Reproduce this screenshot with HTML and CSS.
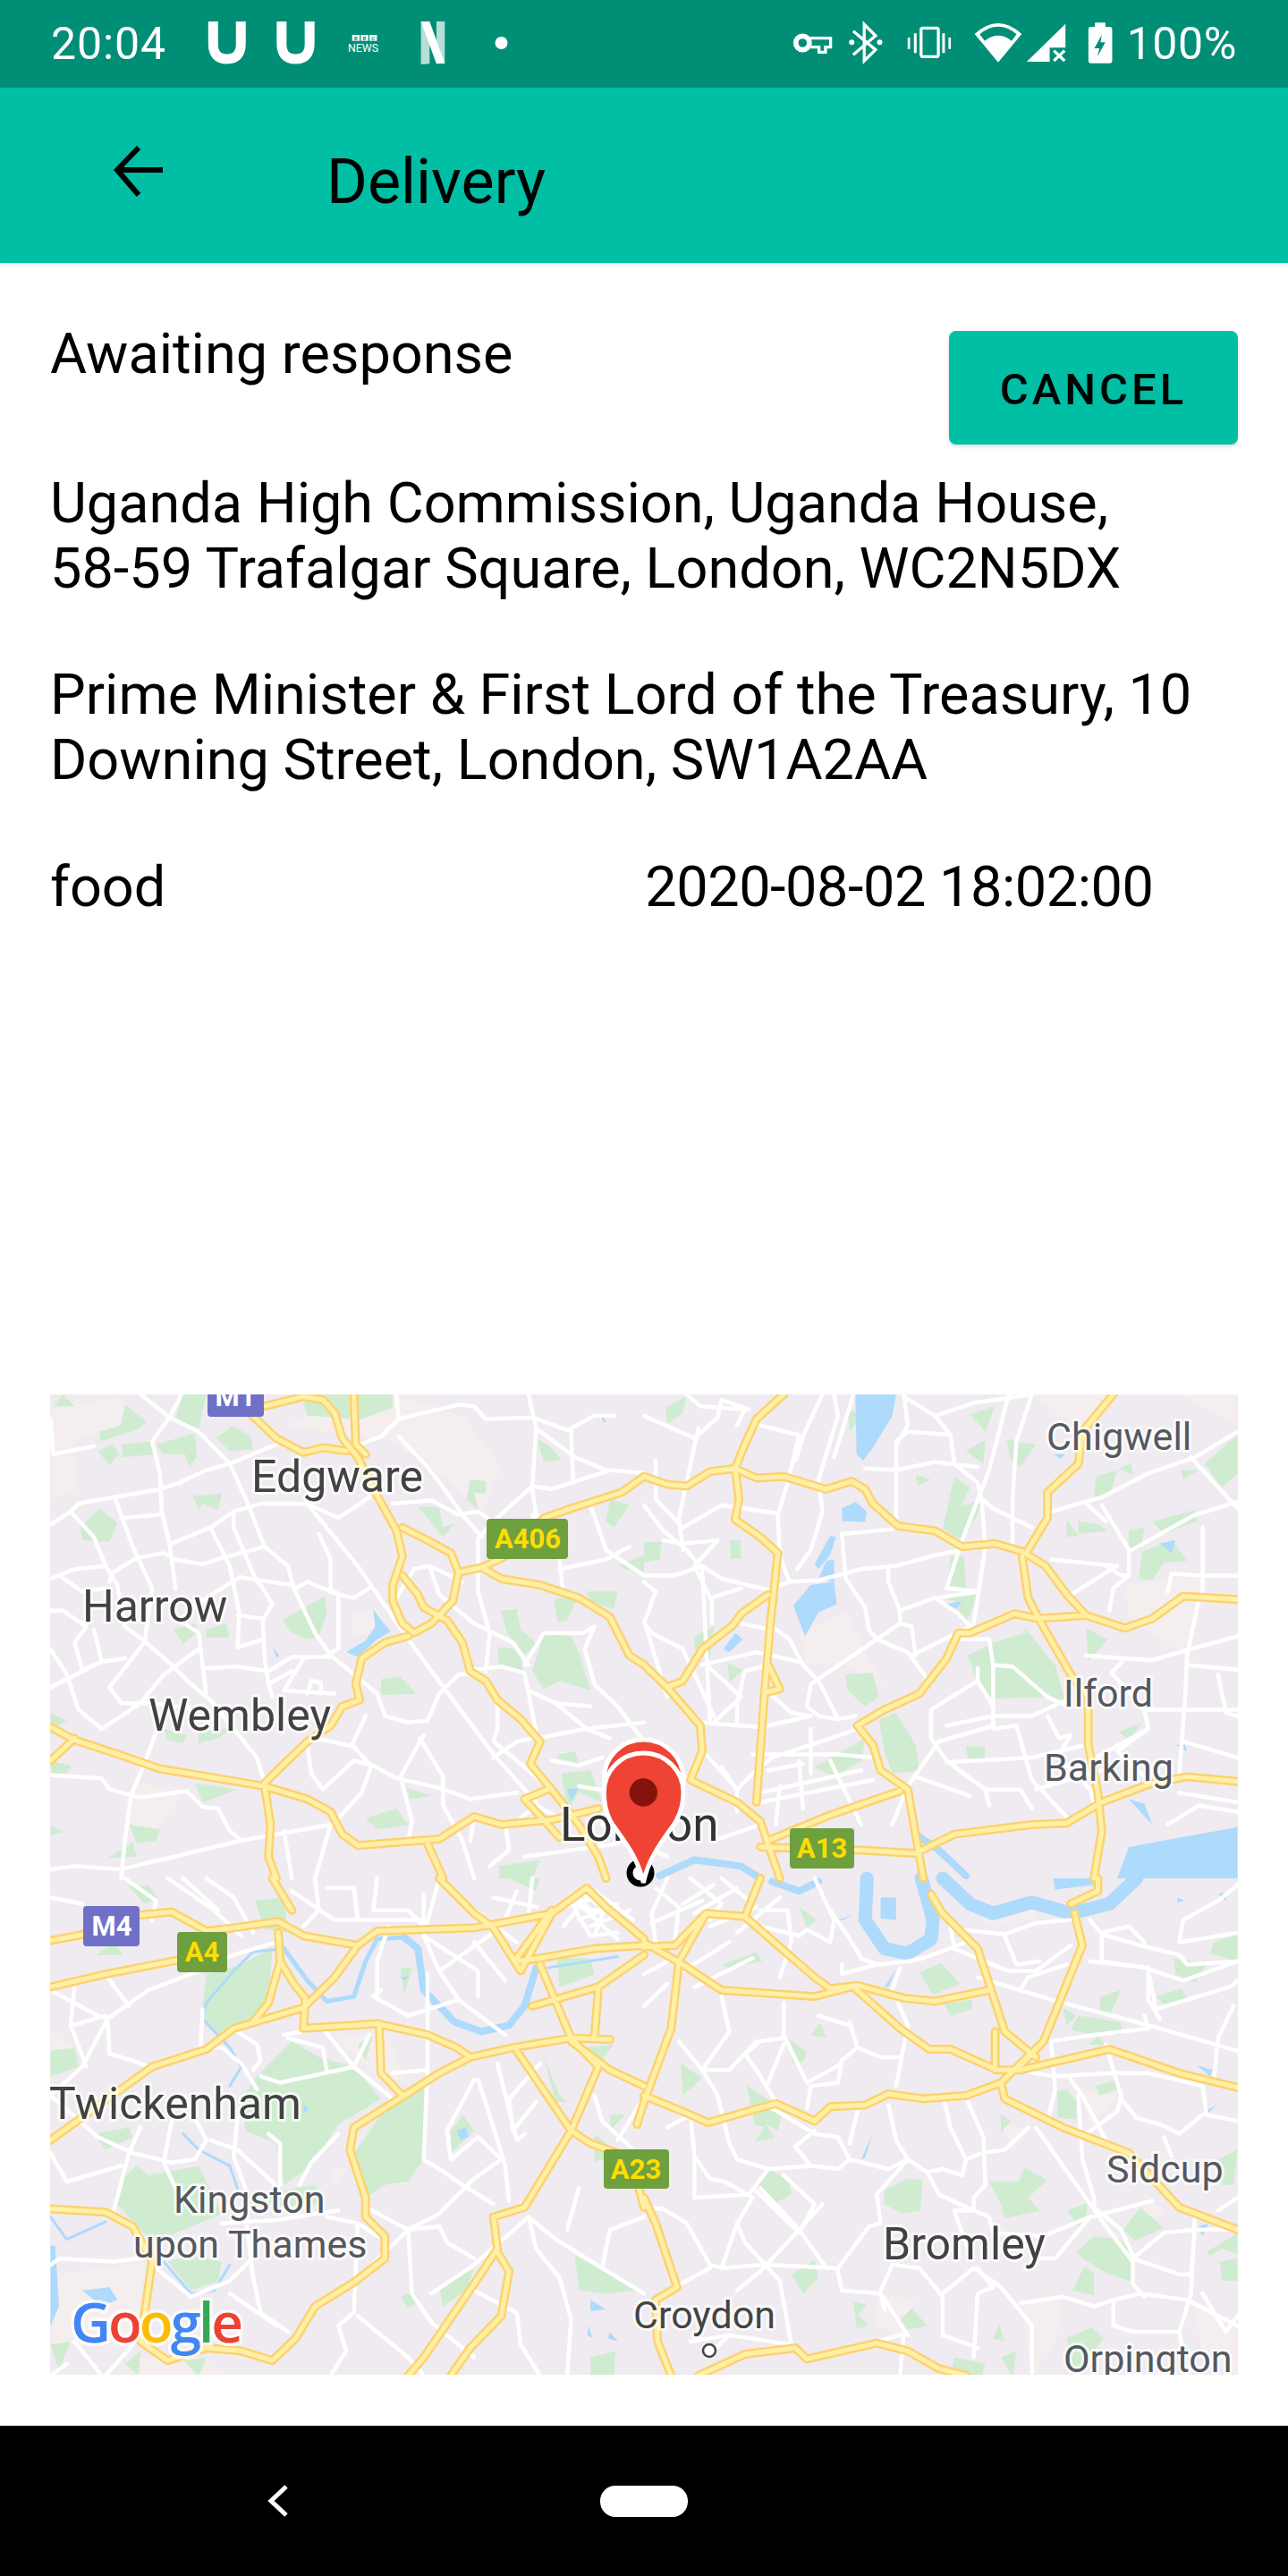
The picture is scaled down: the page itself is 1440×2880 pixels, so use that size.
FILE: index.html
```html
<!DOCTYPE html>
<html lang="en">
<head>
  <meta charset="UTF-8" />
  <meta name="viewport" content="width=device-width, initial-scale=1.0"/>
  <title>Delivery</title>
  <link rel="stylesheet" href="styles.css">
</head>
<body>
  <div class="status-bar">
    <span class="status-time">20:04</span>
    <svg class="status-left" viewBox="0 0 1080 210" width="360" height="70">
      <path class="u" d="M55,30V105Q55,156 101,156Q148,156 148,105V30"/>
      <path class="u" d="M285,30V105Q285,156 332,156Q379,156 379,105V30"/>
      <g class="bbc">
        <rect x="522" y="75" width="25" height="20"/><rect x="551" y="75" width="25" height="20"/><rect x="580" y="75" width="25" height="20"/>
        <text class="bbc-letter" x="534" y="92">B</text><text class="bbc-letter" x="563" y="92">B</text><text class="bbc-letter" x="592" y="92">C</text>
        <text class="bbc-news" x="508" y="132">NEWS</text>
      </g>
      <path class="n-side" d="M753,30H782V172L753,174ZM805,30H833V172L805,170Z"/>
      <path class="n-main" d="M753,30H782L833,170L805,172Z"/>
      <circle class="dot" cx="1023" cy="102" r="21"/>
    </svg>
    <svg class="status-right" viewBox="0 0 1140 210" width="380" height="70">
      <circle class="line" cx="55" cy="102" r="23" stroke-width="17"/>
      <path class="line thin" d="M80,86H149V116H132V133H110V116H82"/>
      <path class="line thin" d="M225,62L300,125L262,162V40L300,78L225,142"/>
      <circle class="dot" cx="220" cy="100" r="9"/><circle class="dot" cx="314" cy="100" r="9"/>
      <rect class="line thin" x="453" y="52" width="58" height="96" rx="6"/>
      <path class="dot" d="M408,84h8v38h-8zM429,70h9v66h-9zM524,70h9v66h-9zM545,84h8v38h-8z"/>
      <path class="dot" d="M712,167L633,72Q712,0 791,72Z"/>
      <path class="cut" d="M650,73Q712,22 774,73L757,95Q712,60 667,95Z"/>
      <path class="dot" d="M808,165L938,38V118H885V165Z"/>
      <path class="line thin" d="M899,128L935,162M935,128L899,162"/>
      <path class="dot" d="M1037,34H1072V48H1086Q1095,48 1095,57V161Q1095,170 1086,170H1024Q1015,170 1015,161V57Q1015,48 1024,48H1037Z"/>
      <path class="cut" d="M1060,75L1035,120H1052L1045,148L1072,100H1056Z"/>
    </svg>
    <span class="status-battery">100%</span>
  </div>

  <header class="app-bar">
    <svg class="back-arrow" viewBox="0 0 60 60" width="60" height="60"><path d="M58,28H9M31,3L7,28L31,56"/></svg>
    <h1>Delivery</h1>
  </header>

  <main class="content">
    <div class="top-row">
      <p class="line">Awaiting response</p>
      <button class="cancel">CANCEL</button>
    </div>
    <p class="address">Uganda High Commission, Uganda House,<br>58-59 Trafalgar Square, London, WC2N5DX</p>
    <p class="address">Prime Minister &amp; First Lord of the Treasury, 10<br>Downing Street, London, SW1A2AA</p>
    <div class="meta-row">
      <span>food</span>
      <span class="when">2020-08-02 18:02:00</span>
    </div>

    <svg class="map" viewBox="56 1559 1328 1096" width="1328" height="1096">
      <defs>
        <path id="yellow-a" d="M590,90L690,60L740,70L770,110L790,190L830,250L880,370L930,480L945,560L920,650L920,700L945,770L975,800
          M820,53L825,210L850,240 M550,110L620,190L690,235L740,220L800,230
          M960,810L900,830L840,880L825,960L835,1010L790,1030L760,1090L700,1140L640,1210L590,1270
          M38,1095L100,1135L200,1175L320,1225L590,1280L700,1320L760,1360L790,1430L830,1465L1040,1445L1130,1375L1200,1400L1330,1385L1450,1350
          M945,470L1010,510L1070,550L1090,610L1150,595L1210,560L1310,440L1380,410L1510,360L1568,310
          M1090,610L1075,700L1020,770L975,800
          M945,620L985,680L1000,720L1060,760L1100,830L1120,920L1160,950L1190,1010L1250,1070L1300,1140L1275,1210L1330,1290L1400,1400L1450,1500L1470,1568
          M1150,595L1200,630L1300,650L1400,690L1480,750L1530,870L1568,900
          M590,1280L605,1400L600,1500L620,1568 M1010,1460L1050,1568 M1260,1320L1320,1290 M1260,1320L1350,1440 M38,1200L100,1130"/>
        <path id="yellow-b" d="M0,310L60,335L110,340L170,295L235,285L290,315L360,310L470,350L535,325L570,350L590,395L655,465L750,480L820,530L905,520L975,545L1035,590L1090,680L1140,745L1240,785L1310,755L1390,685L1530,695
          M360,53L290,130L260,210L235,285L245,380L235,445L300,500L345,550L325,780L310,1000L290,1330
          M320,900L350,975L320,985 M320,680L250,740L230,775L150,850L100,950L60,970
          M0,900L60,970L145,1090L150,1170L120,1260L240,1330L300,1390L325,1480L350,1568
          M1210,53L1130,170L1120,270L1040,360L1040,440L990,540
          M975,560L990,690L1020,760L1100,930L1145,1000L1145,1150L1170,1300L1180,1420L1160,1568
          M1140,745L1015,755L955,740L840,800L810,800L780,880L710,990L620,1040L550,1090L590,1150L610,1230L680,1290L700,1430L720,1568
          M320,1450L480,1370L660,1295
          M300,1470L560,1480L700,1490L800,1430L1000,1400L1090,1395L1180,1330L1310,1270L1400,1250L1530,1265"/>
        <path id="yellow-c" d="M38,195L125,175 M270,115L350,105L440,165L510,155L625,135L690,180L830,210L880,165L1130,155L1330,110L1420,30
          M38,340L180,300L370,255 M625,170L630,260L600,390L560,450
          M630,260L665,330L695,375L690,470L880,455L1010,490L1085,530L1120,560L1230,530L1380,500L1480,505
          M38,820L220,660L300,590L440,535L510,470L690,405L770,310L830,210
          M1120,560L1040,610L950,680L820,780L810,850L850,1000L850,1060L900,1120L900,1190L820,1265L720,1340L670,1440L610,1510L530,1480L440,1470L340,1510L270,1450L300,1200L250,1090L180,1045L38,1035
          M885,455L890,610L945,680 M660,100L610,0 M1040,0L1130,110L1180,155L1250,290L1330,110
          M1300,270L1380,500L1450,590L1380,790L1260,1030L1180,1060L1190,1160L1130,1270L1000,1500L960,1557
          M1190,1170L1220,1230L1200,1370L1120,1470L1070,1557
          M1240,540L1380,790L1430,830L1500,860 M1380,510L1480,600L1568,650 M1450,350L1440,500
          M1280,400L1450,340L1568,240 M1240,260L1300,250L1440,220L1568,210 M1420,30L1470,90L1568,190
          M1550,770L1568,700 M1550,950L1568,1030 M1330,100L1240,250"/>
        <path id="yellow-d" d="M300,0L260,120L160,110L80,210L0,215 M160,110L90,260L70,470L0,700
          M260,120L440,310L480,345L550,335L670,375L750,385L890,350
          M0,200L100,270L200,350L440,370L550,335
          M0,680L110,735L165,765L340,705L440,760L480,715L570,710L630,675L720,690L830,680L920,640L1030,510
          M540,340L660,470L735,535L790,535L910,600L970,600L1040,580L1200,535L1380,610L1530,655
          M740,50L770,110L860,220L930,480L1010,560 M1110,110L1130,210L1030,510L960,600
          M1100,80L1170,40L1170,0 M905,600L905,480
          M920,640L930,690L1080,780L1250,860L1380,1030L1530,1100
          M0,1000L30,1080L85,1280L30,1320L35,1450L70,1557
          M140,1557L260,1490L390,1470L420,1505L600,1455L680,1480L760,1535L830,1557"/>
      </defs>

      <rect class="land" x="56" y="1559" width="1328" height="1096"/>

      <!-- quadrants are traced at the same scale, only the origin changes -->
      <g transform="translate(40,1540) scale(.4337,.3571)">
        <path class="urban" d="M38,100L220,60L260,130L100,200L100,360L38,380Z M640,150L760,100L920,55L1100,120L1200,280L1150,420L1040,300L920,200Z M810,740L880,720L900,800L820,810Z M250,1270L390,1290L300,1430L240,1450Z"/>
        <path class="park" d="M45,90L70,53L100,90Z M165,170L220,150L230,85L285,140L260,165L165,200Z M160,230L200,210L215,240L190,275Z M220,210L300,200L310,240L225,250Z M310,210L410,175L415,250L395,280L385,240L330,240Z M360,130L380,53L440,53L420,160Z M465,190L510,150L555,190L560,225L500,230Z M690,80L720,53L920,53L920,95L840,130L700,120Z M405,370L480,365L470,415L430,395L420,415Z M115,470L165,410L210,455L190,515L120,510Z M635,760L745,685L750,740L730,810L700,820L655,795Z M355,790L410,770L415,800L380,835Z M440,790L490,770L500,815L440,815Z M890,945L940,935L980,990L890,995Z M985,405L1040,405L1050,470L1080,455L1050,500L1010,440Z M1120,320L1160,325L1160,365L1130,360L1140,415L1110,380Z M1290,190L1330,220L1355,260L1310,265Z M1200,730L1240,725L1250,790L1290,830L1260,870L1215,800Z M1190,845L1250,850L1255,920L1195,905Z M1310,800L1380,810L1400,860L1430,980L1350,950L1310,975L1280,920Z M1420,670L1500,670L1490,725L1430,700Z M1335,695L1400,680L1370,760L1345,765Z M1480,380L1530,400L1490,470L1470,450Z M1350,1180L1390,1170L1400,1210L1340,1190Z M1355,1240L1430,1230L1460,1330L1400,1300L1370,1360Z M850,1380L930,1350L960,1400L880,1415Z M955,1285L1020,1310L965,1320Z M240,1400L320,1415L310,1450L260,1460Z M185,1505L250,1455L260,1500Z M40,1400L70,1425L38,1430Z M38,1050L80,1075L40,1100Z M40,1200L90,1215L80,1240L40,1240Z M410,1270L520,1290L430,1330Z M330,1100L390,1120L380,1145L340,1135Z M420,1110L510,1095L470,1130L420,1145Z M1195,1530L1300,1510L1280,1568L1195,1568Z M1500,590L1568,555L1568,610L1520,600Z"/>
        <path class="water" d="M870,725L890,760L915,795L880,820L830,875L800,860L850,825L875,780Z M612,845L628,870L620,878Z M1370,1290L1400,1285L1380,1325Z M1455,105L1470,140L1462,140Z"/>
        <path class="minor" d="M270,53L345,125L420,170L500,270L545,390L590,530L650,590L665,660L720,800L760,870L820,930L880,990L900,1060L960,1080L1010,1075L1040,990
          M375,53L345,125L300,200L320,300L325,420L345,520L360,660
          M38,130L45,240L150,215 M38,460L90,420L110,395L200,375L320,350L370,330L440,290L500,270L560,240L620,210
          M90,420L150,500L180,590L210,650L230,780L285,830L350,900L400,960L450,1010L510,1100L570,1190L590,1270
          M205,380L250,530L300,660L280,830L190,970 M220,440L320,430
          M350,520L450,470L510,420L580,395L700,395L780,440L860,375
          M450,470L480,540L500,590L525,740L520,845L585,820
          M510,420L510,470L570,640L580,650L610,710L585,760L590,880L600,960L610,1000
          M590,530L480,565L430,585L360,570L330,550L260,565L200,610L190,640
          M38,630L60,620L100,600L180,590 M60,620L120,670L180,660
          M700,395L830,590L960,820L1100,1050L1180,1180L1290,1330
          M730,490L760,570L760,660L780,680L780,850L750,870
          M670,660L700,640L780,680L820,690L860,660 M525,625L660,650
          M520,630L440,690L370,760L420,800L430,900L440,1000 M520,745L585,755
          M38,730L70,730L130,780L100,830L120,915L170,890L150,790
          M38,970L170,890L230,880 M38,850L80,930L110,1040L170,1100L270,1020L330,930L420,850
          M190,970L220,1020L300,1020L430,1040 M440,910L520,905L600,920L660,875L760,875
          M690,880L640,980L770,990 M700,990L710,950L735,955L735,990 M600,960L660,920
          M38,1245L170,1255L190,1290L270,1315L390,1295L430,1345L470,1350L500,1420L530,1450L760,1400
          M310,1110L280,1210L245,1310L230,1450L220,1568
          M700,1150L710,1240L740,1290L820,1200L870,1215L930,1255L1040,1285L1120,1320L1240,1300
          M865,1215L840,1300L780,1380 M850,1060L815,1150L860,1210
          M1000,1120L940,1250L970,1390L960,1450 M990,1130L1050,1250L1050,1340L1100,1450L1130,1568
          M720,1130L820,1155 M640,1420L660,1568 M760,1400L720,1568 M38,1540L100,1530L220,1540L530,1450
          M1040,990L1090,930L1120,930
          M835,210L890,185L935,130L1090,85L1130,90L1160,130L1280,125L1370,165L1440,120L1490,120
          M930,53L935,130 M935,185L1010,280L1060,360L1100,430L1150,500
          M920,395L1020,385L1090,430L1140,420L1200,470
          M1270,53L1290,160L1280,340L1180,450L1140,505L1140,670L1170,800L1160,920
          M1280,340L1330,350L1380,330L1480,290L1568,300 M1380,165L1385,320 M1290,160L1390,250L1470,290 M1280,350L1290,430L1310,440
          M1100,640L1015,590L975,600L930,690 M1015,590L1040,680L1130,770L1230,830L1270,900
          M1260,900L1310,800L1410,800L1440,780L1415,850L1440,960L1500,1030L1568,1140
          M1130,915L1200,905L1260,925L1290,1110 M1270,980L1340,1020L1430,1030 M1340,1020L1420,1100L1480,1130
          M1190,1020L1190,1100L1180,1140L1240,1200L1330,1290 M1290,1130L1420,1100L1568,1080 M1180,1190L1240,1140L1280,1130
          M1280,430L1350,570L1360,680 M1430,400L1470,540L1568,620 M1350,600L1470,570L1530,530
          M1130,1375L1120,1450 M1210,1390L1220,1480L1170,1530 M1260,1500L1500,1460 M1330,1200L1400,1215L1460,1190
          M1230,1400L1290,1340L1350,1380 M1400,1280L1500,1300L1568,1260 M1460,1400L1568,1370 M1490,1200L1500,1300L1568,1430"/>
      </g>

      <g transform="translate(720,1540) scale(.4337,.3571)">
        <path class="urban" d="M1000,55L1200,53L1130,170Z M1240,650L1440,620L1400,870L1250,760Z M400,800L520,730L620,980L520,900L420,900Z M1380,53L1530,53L1530,150Z"/>
        <path class="park" d="M55,95L110,60L100,110L60,145Z M0,515L45,515L40,570L0,580Z M220,510L250,510L250,565L225,570Z M525,105L570,110L530,170Z M840,115L905,90L880,170Z M935,195L1010,210L970,280L945,255Z M830,230L880,195L875,270Z M700,305L740,320L705,340Z M800,310L840,345L815,405L870,380L860,430L820,510L770,475Z M790,560L825,560L830,660L785,650Z M1165,310L1220,290L1200,370L1160,375Z M1225,285L1255,270L1260,305Z M1090,445L1120,495L1090,500Z M1120,450L1170,460L1195,480L1120,490Z M1250,480L1290,470L1280,540L1250,530Z M1310,450L1420,415L1425,450L1340,490Z M1285,545L1360,510L1400,575L1340,580L1310,635L1275,630Z M1385,290L1430,290L1390,320Z M1445,270L1530,180L1530,300L1490,345Z M770,690L860,680L830,770L800,700Z M130,810L180,780L170,880L130,850Z M215,895L255,915L220,955Z M520,930L590,925L605,1000L570,1030L525,980Z M605,1070L650,1050L700,1150L710,1230L640,1240L620,1170Z M440,1220L570,1130L560,1200L490,1250Z M835,870L900,830L980,800L1060,900L1060,1000L900,1005L860,960Z M980,780L1040,870L1000,880Z M1000,930L1060,900L1085,1010L1060,1010Z M1140,785L1195,820L1145,890Z M1225,1110L1285,1080L1250,1135Z M830,1155L880,1155L878,1195L835,1195Z"/>
        <path class="water" d="M545,53L650,53L640,120L590,220L565,260L548,240Z M510,410L545,390L575,420L570,452L512,450Z M480,495L495,500L480,555L450,600L440,585Z M470,575L490,570L490,640L450,630Z M385,715L430,650L490,640L497,710L450,735L415,810Z M1330,520L1370,510L1360,550Z M780,710L820,700L805,725Z M1250,1320L1290,1335L1310,1400Z M1220,1568L1250,1470L1340,1450L1530,1408L1530,1568Z M1370,1150L1395,1150L1400,1172Z M205,850L235,800L255,820L220,860Z M1055,240L1085,240L1075,255Z"/>
        <path class="river" d="M40,1560L130,1510L250,1530L300,1568 M700,1430L760,1480L830,1560"/>
        <path class="minor" d="M0,120L130,190L190,125L200,70L270,100 M110,53L145,90L260,100L240,150
          M300,150L400,180L370,330L345,430L350,560L375,640L450,635L560,600L650,590L740,560L815,540
          M460,53L415,170L390,260 M490,53L500,120L450,320L460,420L430,540L395,600 M540,53L490,250
          M670,53L680,150L650,210L650,460 M670,60L750,120L790,180L800,270L860,330L870,380L900,410L1000,470
          M750,120L850,80L1000,53 M790,180L680,170L650,200 M570,285L650,290L750,265L860,280
          M940,53L890,290L820,510L780,660L860,670 M1000,53L960,200L950,380L950,530 M870,380L880,530L850,770
          M1050,420L1180,375L1300,300L1420,250L1530,170 M1410,250L1530,410
          M1180,400L1250,540L1250,620L1210,660L1200,730 M1250,545L1420,430L1530,390 M1140,395L1190,450
          M1050,570L1220,590L1100,680 M1190,590L1230,620L1250,620
          M1440,470L1440,680L1430,700L1400,870L1395,1000L1380,1240 M1360,615L1440,620L1530,620 M1360,615L1350,670
          M510,490L640,475 M510,490L520,630L570,720L580,790L600,820L680,860L740,960
          M630,590L630,640L660,730L660,770L600,820L430,960L420,1030L450,1060L500,1070L545,1060
          M660,770L690,780L700,870 M660,730L750,690L810,740L850,790 M760,690L860,670 M690,870L840,780
          M820,820L890,820L900,900L900,1100 M860,910L860,950L780,1010L740,1040L740,1130L780,1200L880,1290L890,1340
          M860,950L900,1030 M900,900L950,905L1040,1000L1085,1025
          M780,1090L900,1060L1000,1060L1090,1010 M760,1140L900,1090 M760,1140L680,1280
          M780,1205L1000,1190L1140,1150 M800,1220L880,1290L970,1290L1000,1350 M1010,1290L1180,1230
          M900,1100L960,1090L1000,1260L1100,1390 M1040,1060L1070,1130L1100,1120L1070,1180
          M1140,870L1240,880L1310,885L1530,810 M1240,880L1205,925L1290,1040L1300,1100L1150,1200
          M1400,900L1530,915 M1290,1040L1530,1040 M1480,930L1500,1050L1530,1060
          M1300,1100L1220,1170L1290,1250 M1390,1140L1530,1190
          M0,620L80,620L150,590L200,630L320,665L375,640 M50,510L100,520L190,510L130,590L175,700L175,770
          M0,400L50,480L110,540L150,600L170,1080 M100,540L90,440L140,160 M30,260L30,380L100,470L200,400L340,425
          M0,640L30,670L0,770L20,800L100,850L180,1060 M0,760L60,1000
          M175,690L250,660 M330,780L375,820L410,900L450,950L500,1070 M250,770L330,790
          M150,900L290,860L400,890 M170,910L250,1000L180,1080 M260,920L320,900 M260,920L240,1020L240,1090
          M320,985L380,1050L430,1060 M150,1080L300,1095L430,1060 M430,1100L430,1240
          M550,1100L480,1130L330,1190L280,1240L240,1290 M280,1180L500,1180L590,1190
          M300,1300L560,1230 M300,1330L590,1260 M480,1200L560,1400 M400,1200L410,1350 M350,1280L340,1400
          M640,1400L680,1280 M200,1220L240,1290L240,1360 M160,1180L240,1290 M0,1470L60,1500 M300,1400L180,1450
          M0,1180L70,1230L120,1260 M320,1230L410,1210 M700,1250L840,1310 M1080,1200L1150,1290L1160,1330 M1380,1300L1530,1330 M1350,1400L1430,1340L1530,1360"/>
      </g>

      <g transform="translate(40,2100) scale(.4337,.3571)">
        <path class="urban" d="M38,480L100,530L40,560Z M780,500L900,480L960,640L880,620Z M60,1240L280,1200L260,1460L38,1460Z M230,1500L440,1500L500,1557L260,1557Z M900,880L980,880L960,960L900,960Z M760,900L800,910L770,970Z"/>
        <path class="park" d="M240,25L290,20L315,65L280,80Z M565,70L640,60L650,170L590,160Z M155,240L200,200L225,240Z M440,300L530,270L610,215L600,390L560,440L470,490L440,450L430,400Z M38,540L100,530L110,590L38,620Z M570,620L660,510L730,560L820,590L890,690L780,770L710,900L640,960L620,830L540,790L530,690Z M820,860L920,690L1000,640L1000,880L960,950L900,960L850,1000Z M150,800L240,780L250,810L180,850Z M215,950L260,900L290,930L420,900L480,1050L400,1090L300,1140L210,1020Z M340,1200L400,1180L480,1200L470,1260L400,1290Z M530,1000L720,960L740,1020L540,1030Z M830,520L870,490L850,570Z M1070,790L1100,740L1130,790L1070,860Z M1040,1280L1130,1220L1110,1290L1050,1340Z M940,1310L975,1290L990,1320L960,1345Z M1390,1180L1550,1290L1470,1300L1400,1290Z M1430,1500L1495,1480L1490,1557L1430,1557Z M1345,250L1430,250L1440,300L1350,340Z M1415,530L1490,520L1450,580Z M1310,560L1350,680L1370,700L1340,700Z M1480,740L1520,740L1480,790Z M1440,800L1500,860L1440,890Z M940,280L970,280L950,360Z M1220,0L1300,0L1290,40Z M38,1460L90,1450L60,1540Z M230,1520L270,1480L265,1557Z M380,1510L440,1500L420,1557Z"/>
        <path class="water" d="M38,1150L50,1150L60,1340L38,1400Z M120,1290L190,1280L210,1320L170,1340Z M1430,1320L1470,1350L1430,1355Z M1425,1400L1435,1440L1422,1430Z M1480,1420L1500,1450L1475,1440Z M1085,790L1110,780L1115,810L1095,820Z M690,710L705,720L690,740Z M940,310L965,305L950,320Z"/>
        <path class="river" d="M1290,280L1260,400L1220,460L1150,480L1080,450L1000,350L985,220L950,185"/>
        <path class="river-narrow" d="M950,185L880,190L850,260L820,370L750,385L700,320L640,220"/>
        <path class="river-thin" d="M640,220L560,230L510,290L440,390L430,440L500,530L530,590L500,650 M380,800L420,850L500,900L520,970 M330,1200L400,1300L460,1290L500,1210 M38,1060L80,1130L180,1075 M1320,280L1500,245"/>
        <path class="minor" d="M38,60L120,80 M230,0L310,70L300,130 M340,0L460,100L530,180 M380,0L470,100 M440,0L510,60L560,170
          M720,0L730,100L690,150 M750,30L820,30L830,130 M880,0L870,100L960,100L1000,150L1000,50 M660,40L770,130L1000,130
          M38,350L160,430L185,440L290,350L420,290L510,240L620,200 M185,440L120,590L38,680 M95,460L180,430
          M185,310L240,400 M100,330L90,460L130,590 M185,450L190,550L250,570L290,590
          M430,410L425,530L480,530L530,580L570,660 M520,480L570,520L580,570L560,600
          M580,620L630,640L820,590L920,690 M650,500L740,530L750,600 M640,490L740,470L820,590 M820,590L860,490
          M920,610L1010,600 M1010,300L1010,600L1000,880L1040,910L1100,960L1180,1020
          M1130,630L1060,790L1070,880L1140,810L1200,880L1130,940L1040,1050L960,1100L820,1265
          M1140,630L1180,780L1210,900L1220,1010 M1190,580L1240,820L1260,800
          M1040,0L1000,180L1040,290L1090,380L1210,490 M1000,180L1140,290L1140,370 M1090,380L960,430L870,370L890,350
          M1040,290L1180,170 M910,150L880,260L880,370
          M38,680L160,810L250,860L350,890L410,880L440,820L380,680 M270,780L240,860L210,1000L200,1040 M350,760L330,890L360,970
          M450,820L520,850L610,950L640,1000 M520,750L510,870L540,970 M600,800L630,830L630,960
          M38,860L80,950L220,900 M780,800L710,890L680,960
          M750,1060L830,1080L880,1120 M480,1080L620,1070L780,1040 M540,1040L560,1250L580,1360L650,1420
          M850,1030L960,1100L970,1300L1020,1390L1130,1500 M960,1100L1040,1090L1060,1140L1130,1190
          M38,1210L60,1190L200,1200L270,1190 M290,1200L400,1310L500,1260L550,1200 M500,1300L620,1400
          M830,1080L820,1360L780,1400L800,1480L760,1557 M830,1370L960,1500L1000,1557
          M1020,1300L1130,1210L1270,1060L1340,1130L1460,1220L1568,1300 M1270,1060L1290,1160L1350,1250L1380,1380L1370,1557
          M1130,1290L1240,1360L1250,1460L1300,1557
          M38,1557L80,1520 M100,1450L170,1557 M250,1460L180,1557
          M1300,580L1220,690L1230,790L1290,700 M1440,680L1460,760L1568,880 M1460,1220L1480,1100L1568,1060 M1400,970L1370,1100
          M1390,50L1430,100L1480,100 M1280,0L1270,120 M1380,50L1390,100L1430,180L1500,170 M1380,60L1500,190 M1420,60L1360,150 M1470,80L1440,180 M1560,700L1500,820
          M1400,40L1520,140 M1440,40L1540,130 M1360,90L1450,60 M1400,130L1500,80 M1430,150L1530,100 M1180,60L1290,90 M1240,40L1210,130 M1130,200L1210,320 M1090,60L1240,200"/>
      </g>

      <g transform="translate(720,2100) scale(.4337,.3571)">
        <path class="urban" d="M860,100L1000,80L1020,130L880,140Z M1120,660L1220,680L1150,780Z M1280,1000L1350,1040L1280,1100Z M970,1330L1080,1310L1060,1460L1000,1557Z M600,1300L700,1320L660,1430L600,1400Z M1420,1340L1530,1400L1530,1557L1440,1500Z M920,760L1000,790L950,850Z"/>
        <path class="park" d="M400,90L445,130L420,155Z M200,270L290,230L305,260L215,280Z M710,295L765,265L815,330L745,365Z M1365,250L1450,270L1420,325L1370,300Z M1470,200L1530,175L1530,260L1460,235Z M1175,370L1230,350L1200,430L1175,420Z M1320,370L1385,345L1400,375L1350,405Z M1080,405L1115,430L1090,460Z M1120,430L1230,450L1230,490L1160,490L1100,475Z M1145,520L1170,495L1195,525Z M775,395L845,380L845,410L790,430Z M365,495L420,545L410,575L385,580Z M430,490L455,455L470,500Z M1165,650L1220,630L1220,660L1175,680Z M1065,665L1090,660L1115,700L1115,755L1065,750Z M920,740L945,760L920,795Z M265,650L330,700L355,740L345,790L315,770L335,815L285,825L310,780L285,770Z M95,580L150,625L100,680Z M295,960L325,915L375,945L380,990L340,1015Z M620,975L680,940L718,945L712,1040L665,1050L620,1020Z M890,950L965,950L980,905L1040,945L990,1000L1020,1040L930,1065L920,1020Z M1090,1040L1145,1015L1135,1080L1120,1090Z M1235,1100L1280,1030L1340,1095L1265,1135Z M1115,1170L1160,1120L1225,1130L1260,1170L1260,1265L1190,1235L1130,1190Z M1105,1290L1135,1215L1160,1235L1160,1305Z M380,1240L440,1195L450,1250L410,1300Z M540,1325L575,1335L550,1365L580,1400L548,1410Z M655,1390L690,1345L730,1400L675,1415Z M900,1440L915,1395L930,1450Z M920,1500L960,1480L950,1557Z M1090,1440L1155,1405L1185,1440L1110,1557Z M1450,1170L1530,1110L1530,1175L1490,1160L1460,1180Z M1485,1200L1530,1190L1530,1260L1490,1260Z M800,1500L880,1520L870,1557L790,1557Z M1480,880L1530,850L1520,960L1490,960Z"/>
        <path class="water" d="M1425,585L1465,600L1460,620Z M560,880L590,795L570,875Z M1445,730L1475,710L1450,740Z M1430,1090L1455,1080L1440,1120Z M500,130L540,115L510,132Z M620,340L650,285L630,340Z M1055,0L1165,0L1160,20L1060,35Z M1480,50L1505,40L1500,70Z M1375,60L1395,70L1375,75Z M610,125L650,130L650,60L610,60Z"/>
        <path class="river-wide" d="M1270,0L1200,80L1100,110L1000,75L900,110L840,80L770,0 M575,0L570,130L620,220L680,235L740,190L745,130L715,0"/>
        <path class="river" d="M330,10L400,40L450,10"/>
        <path class="minor" d="M60,0L20,110L30,200 M120,0L200,80L170,130 M200,0L270,70 M300,100L370,100L380,200L350,310
          M480,100L530,190L560,250L600,270L680,260L720,250L830,200L860,210 M440,0L490,130L480,200L420,160L400,180L300,150
          M510,270L510,300L570,280L600,270 M660,280L640,350L680,460L650,650
          M790,150L800,220L940,290L1010,290L1100,210 M930,180L960,270L1020,260 M810,160L930,175L1010,140L1100,130
          M1150,130L1180,175L1180,260L1290,280L1390,320L1530,260 M1180,175L1280,210L1380,240L1400,270L1530,260
          M1390,130L1480,70L1530,20 M1390,130L1380,200L1530,170 M1290,200L1250,150L1180,170
          M1150,260L1300,280L1300,380L1330,440 M1300,290L1320,410L1400,380 M1400,380L1510,340L1530,320
          M860,310L1050,380L1300,460L1530,540 M970,350L990,310L1090,270 M1520,400L1480,500L1470,620
          M1290,430L1300,470L1160,490L1050,510 M1190,520L1230,680L1220,730L1140,800 M1100,630L1130,680L1200,840
          M960,600L1060,620L1200,610L1300,610L1440,650L1450,740L1530,760 M1440,740L1380,800L1330,770L1270,750L1230,690
          M1050,520L1060,660L1040,760 M1120,680L1130,880L1160,1000L1160,1040L1260,1200L1260,1270L1290,1310
          M1010,780L1150,1020L1230,1100L1260,1180 M1340,810L1360,870
          M990,780L930,850L870,860L830,880L820,930L770,910L730,920L680,880L630,910L530,880
          M630,710L650,820L680,880L600,990L610,1080L580,1090L500,1220L470,1220L400,1100L300,970
          M775,700L790,780L830,880 M835,700L875,810L880,960L850,1000L850,1040L800,1040
          M730,920L760,990L850,1040L890,1060L900,1110L1030,1120L1150,1060L1310,1010 M800,1040L840,1180 M1150,1060L1060,1190L1000,1190
          M330,720L440,800L500,810L530,880L500,910L430,900L390,840L440,790 M550,730L530,830
          M430,650L500,640L510,570L550,530L610,560L660,560 M430,650L420,720 M530,450L550,530 M450,430L530,460
          M360,390L360,490L420,640L510,580 M360,500L300,510L260,550L290,600L340,700 M360,520L320,640
          M200,370L220,480L150,600L190,680L220,830L240,880L320,910L430,900 M150,600L90,510 M150,600L220,600L290,510
          M320,910L270,990L130,1000L130,870 M290,980L400,1110L440,1020L360,930 M400,1100L460,1020
          M60,780L120,740L130,870L170,940L210,950L280,1000
          M0,1030L50,1035L110,1080L170,1210L200,1220L240,1080L280,1000 M240,1080L260,1140L350,1260L380,1460
          M200,1220L310,1210L500,1220 M80,1280L170,1220 M240,1290L300,1230L400,1100
          M500,1230L510,1290L610,1300L680,1430 M610,1300L620,1350 M640,1210L610,1290
          M640,1210L710,1220L770,1310L770,1430L860,1470 M770,1300L850,1220L920,1280L1000,1400L1000,1557 M860,1220L900,1280L860,1300L850,1500
          M970,1330L1080,1310L1160,1340L1210,1320L1280,1300L1400,1320L1530,1400 M1210,1320L1210,1400L1260,1420L1380,1420
          M1260,1190L1380,1240L1410,1240L1420,1100L1530,1100 M1420,1060L1410,1300L1380,1420L1400,1557 M1260,1190L1340,1110L1420,1100
          M1440,1300L1500,1420L1530,1370 M1480,1040L1530,1000
          M120,1450L220,1430L380,1460 M160,1500L220,1430 M660,1430L600,1450 M670,1420L660,1557
          M0,300L60,260 M0,400L60,330 M30,30L90,90L80,190 M100,80L180,20 M130,110L240,30 M20,140L150,70 M170,150L290,90 M240,170L350,60 M100,290L220,200 M130,340L280,250"/>
      </g>

      <g class="major-casing">
        <use href="#yellow-a" transform="translate(40,1540) scale(.4337,.3571)"/>
        <use href="#yellow-b" transform="translate(720,1540) scale(.4337,.3571)"/>
        <use href="#yellow-c" transform="translate(40,2100) scale(.4337,.3571)"/>
        <use href="#yellow-d" transform="translate(720,2100) scale(.4337,.3571)"/>
      </g>
      <g class="major-fill">
        <use href="#yellow-a" transform="translate(40,1540) scale(.4337,.3571)"/>
        <use href="#yellow-b" transform="translate(720,1540) scale(.4337,.3571)"/>
        <use href="#yellow-c" transform="translate(40,2100) scale(.4337,.3571)"/>
        <use href="#yellow-d" transform="translate(720,2100) scale(.4337,.3571)"/>
      </g>

      <g class="place big">
        <text x="281" y="1668">Edgware</text>
        <text x="92" y="1813">Harrow</text>
        <text x="166" y="1935">Wembley</text>
        <text x="55" y="2369">Twickenham</text>
        <text x="987" y="2526">Bromley</text>
      </g>
      <text class="place london" x="626" y="2058">London</text>
      <g class="place small">
        <text x="1170" y="1621">Chigwell</text>
        <text x="1189" y="1908">Ilford</text>
        <text x="1167" y="1991">Barking</text>
        <text x="194" y="2474">Kingston</text>
        <text x="149" y="2524">upon Thames</text>
        <text class="dark" x="708" y="2603">Croydon</text>
        <text x="1237" y="2440">Sidcup</text>
        <text x="1189" y="2652">Orpington</text>
      </g>
      <circle class="town-dot" cx="793" cy="2628" r="7"/>

      <g class="shields">
        <rect class="motorway" x="232" y="1540" width="63" height="44" rx="4"/>
        <text class="white" x="263" y="1572">M1</text>
        <rect class="primary" x="544" y="1698" width="91" height="45" rx="4"/>
        <text x="590" y="1731">A406</text>
        <rect class="primary" x="883" y="2044" width="72" height="45" rx="4"/>
        <text x="919" y="2077">A13</text>
        <rect class="motorway" x="93" y="2131" width="63" height="45" rx="4"/>
        <text class="white" x="125" y="2164">M4</text>
        <rect class="primary" x="198" y="2160" width="56" height="45" rx="4"/>
        <text x="226" y="2193">A4</text>
        <rect class="primary" x="675" y="2403" width="73" height="44" rx="4"/>
        <text x="711" y="2436">A23</text>
      </g>

      <text class="google" x="79" y="2619"><tspan class="g-blue">G</tspan><tspan class="g-red">o</tspan><tspan class="g-yellow">o</tspan><tspan class="g-blue">g</tspan><tspan class="g-green">l</tspan><tspan class="g-red">e</tspan></text>

      <ellipse class="pin-ring" cx="716" cy="2094" rx="12" ry="12"/>
      <g transform="translate(600,1885) scale(.3333)">
        <path class="pin" d="M358,615C340,530 290,470 255,420C235,390 226,350 226,312C226,238 285,180 358,180C431,180 492,238 492,312C492,350 480,390 460,420C425,470 375,530 358,615Z"/>
      </g>
      <g transform="translate(600,1900) scale(.3333)">
        <path class="pin" d="M358,615C340,530 290,470 255,420C235,390 226,350 226,312C226,238 285,180 358,180C431,180 492,238 492,312C492,350 480,390 460,420C425,470 375,530 358,615Z"/>
        <circle class="pin-dot" cx="358" cy="312" r="47"/>
      </g>
    </svg>
  </main>

  <nav class="nav-bar">
    <svg class="nav-back" viewBox="0 0 24 40" width="24" height="40"><path d="M21,4L4,20L21,36"/></svg>
    <div class="nav-home"></div>
  </nav>
</body>
</html>
```

FILE: styles.css
```css
body { margin: 0; background: #fff; color: #000; font-family: Roboto, "Liberation Sans", sans-serif; width: 1440px; height: 2880px; overflow: hidden; display: flex; flex-direction: column; }

/* status bar */
.status-bar { height: 98px; background: #008f76; color: #fff; display: flex; align-items: center; padding-left: 57px; padding-right: 57px; box-sizing: border-box; }
.status-time { font-size: 50px; letter-spacing: .9px; width: 163px; }
.status-left { display: block; }
.status-right { display: block; margin-left: 300px; }
.status-battery { font-size: 50px; letter-spacing: .6px; margin-left: 1px; }
.status-bar svg { fill: none; }
.status-bar .u { stroke: #fff; stroke-width: 33; }
.status-bar .dot { fill: #fff; }
.status-bar .cut { fill: #008f76; }
.status-bar .line { stroke: #fff; fill: none; }
.status-bar .thin { stroke-width: 10; }
.bbc rect { fill: #fff; }
.bbc-letter { font-size: 17px; font-weight: 700; fill: #008f76; text-anchor: middle; }
.bbc-news { font-size: 37px; fill: #fff; }
.n-side { fill: #b5dfd7; }
.n-main { fill: #fff; }

/* app bar */
.app-bar { height: 196px; background: #00bfa5; display: flex; align-items: center; box-shadow: 0 2px 5px rgba(0,0,0,.12); position: relative; }
.back-arrow { margin-left: 124px; margin-top: -8px; }
.back-arrow path { fill: none; stroke: #000; stroke-width: 6; }
.app-bar h1 { margin: 0 0 0 181px; font-size: 70px; font-weight: 400; line-height: 82px; padding-top: 14px; }

/* details */
.content { padding: 65px 56px 0; flex: 1; }
.top-row { display: flex; justify-content: space-between; align-items: flex-start; height: 168px; }
.top-row .line { margin: 0; font-size: 63px; line-height: 73px; }
.cancel { margin-top: 11px; width: 323px; height: 127px; border: none; border-radius: 8px; background: #00bfa5; color: #000; font-family: Roboto, sans-serif; font-size: 49px; font-weight: 500; letter-spacing: 4px; padding: 4px 0 0; box-shadow: 0 2px 4px rgba(0,0,0,.15); }
.address { margin: 0 0 69px; font-size: 63px; line-height: 72.5px; }
.meta-row { display: flex; font-size: 63px; line-height: 73px; }
.when { margin-left: 536px; letter-spacing: -.45px; }
.map { display: block; margin-top: 531px; }

/* map */
.map path { vector-effect: non-scaling-stroke; }
.land { fill: #efebf0; }
.urban { fill: #f5eeef; }
.park { fill: #cfecd0; }
.water { fill: #aedafc; }
.minor, .river, .river-wide, .river-narrow, .river-thin { fill: none; stroke-linejoin: round; stroke-linecap: round; }
.minor { stroke: #fff; stroke-width: 4.5px; }
.river-wide { stroke: #aedafc; stroke-width: 15px; }
.river { stroke: #aedafc; stroke-width: 8px; }
.river-narrow { stroke: #aedafc; stroke-width: 5px; }
.river-thin { stroke: #aedafc; stroke-width: 3px; }
.major-casing, .major-fill { fill: none; stroke-linejoin: round; stroke-linecap: round; }
.major-casing { stroke: #fdd26e; stroke-width: 10px; }
.major-fill { stroke: #fff0a6; stroke-width: 5px; }

.place text, .place.london { paint-order: stroke; stroke: rgba(255,255,255,.72); stroke-width: 6px; stroke-linejoin: round; }
.big { font-size: 50px; fill: #424242; }
.london { font-size: 53px; fill: #333; }
.small { font-size: 43px; fill: #55585f; }
.small .dark { fill: #444; }
.town-dot { fill: #fff; stroke: #444; stroke-width: 2.5px; }

.shields text { font-size: 31px; font-weight: 700; text-anchor: middle; fill: #ffdc00; }
.shields text.white { fill: #fff; }
.motorway { fill: #7071c6; }
.primary { fill: #6ea03e; }

.google { font-family: "Open Sans", sans-serif; font-size: 62px; font-weight: 600; paint-order: stroke; stroke: rgba(255,255,255,.75); stroke-width: 7px; letter-spacing: -3px; }
.g-blue { fill: #4285f4; }
.g-red { fill: #ea4335; }
.g-yellow { fill: #fbbc05; }
.g-green { fill: #34a853; }

.pin { fill: #ee4335; stroke: #fff; stroke-width: 5px; }
.pin-dot { fill: #84130e; }
.pin-ring { fill: #fff; stroke: #000; stroke-width: 7px; }

/* nav bar */
.nav-bar { height: 168px; background: #000; display: flex; align-items: center; padding-left: 299px; }
.nav-back path { fill: none; stroke: #fff; stroke-width: 5; }
.nav-home { width: 98px; height: 35px; border-radius: 17px; background: #fff; margin-left: 348px; }
```
